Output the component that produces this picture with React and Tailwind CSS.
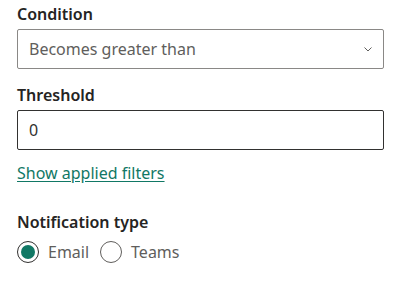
import React, { useState } from 'react'

function Radio({ checked, label, onClick }) {
  return (
    <label className="flex items-center gap-[9px] cursor-pointer" onClick={onClick}>
      <span className={`flex h-[22px] w-[22px] items-center justify-center rounded-full border ${checked ? 'border-[#323130]' : 'border-[#605e5c]'}`}>
        {checked && <span className="h-[14px] w-[14px] rounded-full bg-[#117865]" />}
      </span>
      <span className="text-[16px] leading-[22px] text-[#605e5c]">{label}</span>
    </label>
  )
}

export default function App() {
  const [type, setType] = useState('email')
  const [threshold, setThreshold] = useState('0')

  return (
    <div className="h-[287px] w-[409px] bg-white pl-[17px] pr-[25px] pt-[3px]" style={{ fontFamily: '"Segoe UI", "Noto Sans", "Open Sans", sans-serif' }}>
      <div className="text-[16px] font-semibold leading-[22px] text-[#252423]">Condition</div>
      <div className="mt-[4px] flex h-[40px] items-center justify-between rounded-[2px] border border-[#8a8886] pl-[11px] pr-[9px]">
        <span className="text-[16px] text-[#605e5c]">Becomes greater than</span>
        <svg width="12" height="12" viewBox="0 0 12 12" fill="none">
          <path d="M2.5 4.5 L6 8 L9.5 4.5" stroke="#605e5c" strokeWidth="1" />
        </svg>
      </div>

      <div className="mt-[15px] text-[16px] font-semibold leading-[22px] text-[#252423]">Threshold</div>
      <input
        value={threshold}
        onChange={(e) => setThreshold(e.target.value)}
        className="mt-[4px] block h-[40px] w-full rounded-[2px] border border-[#323130] px-[11px] text-[16px] text-[#323130] outline-none"
      />

      <a href="#" className="mt-[12px] inline-block text-[16px] leading-[22px] text-[#117865] underline underline-offset-2">
        Show applied filters
      </a>

      <div className="mt-[26px] text-[16px] font-semibold leading-[22px] text-[#252423]">Notification type</div>
      <div className="mt-[8px] flex items-center gap-[11px]">
        <Radio checked={type === 'email'} label="Email" onClick={() => setType('email')} />
        <Radio checked={type === 'teams'} label="Teams" onClick={() => setType('teams')} />
      </div>
    </div>
  )
}
